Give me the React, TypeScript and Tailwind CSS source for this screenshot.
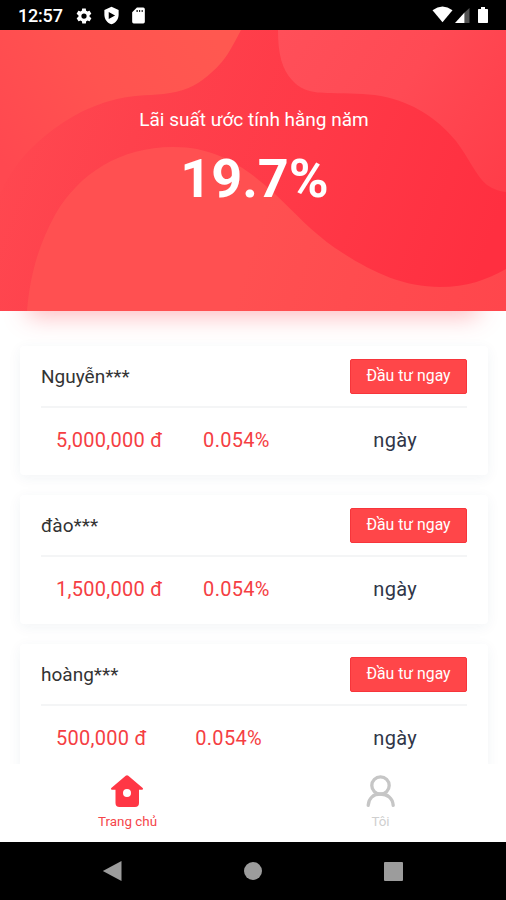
const loans = [
  { name: 'Nguyễn***', amount: '5,000,000 đ', rate: '0.054%' },
  { name: 'đào***', amount: '1,500,000 đ', rate: '0.054%' },
  { name: 'hoàng***', amount: '500,000 đ', rate: '0.054%' },
];

function StatusBar() {
  return (
    <div className="flex h-[30px] shrink-0 items-center bg-black pr-[15px] pl-[18px] text-white">
      <span className="w-[57px] pt-0.5 text-[18px] leading-none font-medium tracking-[-0.2px]">12:57</span>
      <svg className="mt-px h-[18px] w-[18px]" viewBox="0 0 24 24" fill="currentColor">
        <path fillRule="evenodd" d="M19.4 13a7.7 7.7 0 0 0 0-2l2.1-1.7c.2-.2.3-.4.1-.6l-2-3.5c-.1-.2-.4-.3-.6-.2l-2.5 1a7.300 7.300 0 0 0-1.700-1l-.4-2.600c0-.2-.2-.4-.5-.4h-4c-.2 0-.4.2-.4.4L9.100 5a7.300 7.300 0 0 0-1.700 1l-2.500-1c-.2-.1-.5 0-.6.2l-2 3.500c-.1.2-.1.4.1.6L4.600 11a7.700 7.700 0 0 0 0 2l-2.100 1.700c-.2.2-.3.4-.1.6l2 3.500c.1.2.4.3.6.2l2.500-1c.5.4 1.100.7 1.700 1l.4 2.600c0 .2.2.4.4.4h4c.3 0 .5-.2.5-.4l.4-2.600a7.300 7.300 0 0 0 1.700-1l2.500 1c.2.1.5 0 .6-.2l2-3.500c.1-.2.1-.4-.1-.6zM12 15.500a3.500 3.500 0 1 1 0-7 3.500 3.500 0 0 1 0 7z" />
      </svg>
      <svg className="ml-[9px] h-[19px] w-[19px]" viewBox="0 0 24 24" fill="currentColor">
        <path fillRule="evenodd" d="M12 1 3 5v6c0 5.500 3.800 10.700 9 12 5.200-1.300 9-6.500 9-12V5zM8.500 7.500l8 4.500-8 4.500z" />
      </svg>
      <svg className="ml-[8px] h-[19px] w-[19px]" viewBox="0 0 24 24" fill="currentColor">
        <path fillRule="evenodd" d="M18 2h-8L4 8v12a2 2 0 0 0 2 2h12a2 2 0 0 0 2-2V4a2 2 0 0 0-2-2zM9.500 7.500V5h1.500v2.500zm3.300 0V5h1.300v2.500zm3.200 0V5h1.300v2.500z" />
      </svg>
      <svg className="ml-auto h-[30px] w-[60px]" viewBox="0 0 60 30" fill="white">
        <path d="M1.500 10.200Q11.500 2.800 21.500 10.200L11.500 22.300z" />
        <path d="M33.500 12.500 38.500 8v15h-5z" opacity=".32" />
        <path d="M24 23 33.500 12.500V23z" />
        <path d="M47.700 9h2.300V7h4v2h2.300q.7 0 .7.700v12.600q0 .7-.7.700h-8.600q-.7 0-.7-.7V9.700q0-.7.700-.7z" />
      </svg>
    </div>
  );
}

function HeroWaves() {
  return (
    <svg className="absolute inset-0 h-full w-full" viewBox="0 0 506 281" preserveAspectRatio="none">
      <defs>
        <linearGradient id="base" x1="0" y1="0.4" x2="1" y2="0.6">
          <stop offset="0" stopColor="#ff4850" />
          <stop offset="0.25" stopColor="#fe414c" />
          <stop offset="0.6" stopColor="#ff3947" />
          <stop offset="1" stopColor="#ff2f40" />
        </linearGradient>
        <linearGradient id="topLeft" gradientUnits="userSpaceOnUse" x1="210" y1="0" x2="0" y2="130">
          <stop offset="0" stopColor="#ff5850" />
          <stop offset="0.5" stopColor="#ff5350" />
          <stop offset="1" stopColor="#ff4850" />
        </linearGradient>
        <linearGradient id="topRight" gradientUnits="userSpaceOnUse" x1="280" y1="0" x2="506" y2="150">
          <stop offset="0" stopColor="#ff4f59" />
          <stop offset="0.5" stopColor="#ff4a54" />
          <stop offset="1" stopColor="#ff3d49" />
        </linearGradient>
        <linearGradient id="bottom" gradientUnits="userSpaceOnUse" x1="90" y1="150" x2="506" y2="281">
          <stop offset="0" stopColor="#ff5051" />
          <stop offset="0.4" stopColor="#ff5051" />
          <stop offset="1" stopColor="#ff464c" />
        </linearGradient>
      </defs>
      <rect width="506" height="281" fill="url(#base)" />
      <path fill="url(#topLeft)" d="M0 0H241C232 17 226 30 212 42C200 53 189 60 170 63C152 66 137 64 117 69C84 77 59 93 38 112C20 128 9 144 0 165z" />
      <path fill="url(#topRight)" d="M278 0C278 24 282 39 292 50C301 60 311 63 331 63C350 64 364 63 381 66C413 72 438 89 456 111C469 128 476 146 487 155Q496 161 506 162V0z" />
      <path fill="url(#bottom)" d="M27 281C30 246 38 216 55 185C79 143 121 117 173 117C219 117 247 139 274 163C297 185 311 201 335 218C368 240 401 257 440 257C467 257 486 250 506 239V281z" />
    </svg>
  );
}

function LoanCard({ name, amount, rate }: { name: string; amount: string; rate: string }) {
  return (
    <div className="flex h-[129px] shrink-0 flex-col rounded-[4px] bg-white px-[21px] pt-[13px] shadow-[0_3px_14px_rgba(40,60,100,0.06)]">
      <div className="flex h-[35px] items-center justify-between">
        <span className="pt-[2px] text-[19px] text-[#333]">{name}</span>
        <button className="h-[35px] w-[117px] rounded-[2px] border border-[#f7353b] bg-[#ff4649] pb-[2px] text-[15.8px] leading-none whitespace-nowrap text-white">
          Đầu tư ngay
        </button>
      </div>
      <div className="mt-[12px] h-[2px] bg-[#f4f5f6]" />
      <div className="flex h-[64px] items-center pr-[50px] pl-[15px] text-[20px] leading-none text-[#f53e43]">
        <span className="tracking-[0.28px] whitespace-nowrap">{amount}</span>
        <span className="flex-1" />
        <span className="tracking-[0.3px]">{rate}</span>
        <span className="grow basis-[63px]" />
        <span className="tracking-[0.3px] text-[#303648]">ngày</span>
      </div>
    </div>
  );
}

function BottomTabs() {
  return (
    <nav className="grid h-[78px] shrink-0 grid-cols-2 bg-white text-[13.4px] leading-none">
      <div className="flex flex-col items-center pt-[10px] text-[#f5454a]">
        <svg className="h-[34px] w-[34px]" viewBox="0 0 34 34">
          <path fill="#ff3745" fillRule="evenodd" d="M15.700 1.800q1.300-1 2.600 0L32.700 14q1 1-.4 1.800H29V29q0 4-4 4H9.500q-4 0-4-4V15.800H1.700q-1.400-.8-.4-1.800zM17 15a4 4 0 1 0 0 8 4 4 0 0 0 0-8z" />
        </svg>
        <span className="mt-[7px] ml-[2px]">Trang chủ</span>
      </div>
      <div className="flex flex-col items-center pt-[10px] text-[#cfcfcf]">
        <svg className="h-[34px] w-[34px]" viewBox="0 0 34 34" fill="none" stroke="#c6c6c6" strokeWidth="3.300" strokeLinecap="round">
          <circle cx="17.500" cy="11.500" r="8.700" />
          <path d="M5.200 31.300C5.700 24 10.700 20 17.500 20S29.700 24 30.200 31.300" />
        </svg>
        <span className="mt-[7px] ml-[2px]">Tôi</span>
      </div>
    </nav>
  );
}

function SystemNav() {
  return (
    <div className="flex h-[58px] shrink-0 items-center justify-between bg-black pr-[103px] pl-[102px]">
      <svg className="h-[22px] w-[20px]" viewBox="0 0 20 22" fill="#9c9c9c">
        <path d="M19.500 1v20L.8 11z" />
      </svg>
      <div className="h-[18px] w-[18px] rounded-full bg-[#9c9c9c]" />
      <div className="h-[19px] w-[19px] rounded-[1px] bg-[#9c9c9c]" />
    </div>
  );
}

export default function App() {
  return (
    <div className="flex h-[900px] w-[506px] flex-col overflow-hidden bg-white font-[Roboto,'Noto_Sans',sans-serif]">
      <StatusBar />
      <header className="relative z-10 h-[281px] shrink-0">
        <div className="absolute inset-x-[28px] bottom-0 h-[40px] shadow-[0_5px_24px_rgba(255,70,85,0.38)]" />
        <HeroWaves />
        <div className="relative flex flex-col items-center pt-[79px] text-white">
          <p className="ml-[2px] text-[19px] leading-[22px] whitespace-nowrap">Lãi suất ước tính hằng năm</p>
          <p className="mt-[18px] ml-[3px] text-[54px] leading-[60px] font-bold">19.7%</p>
        </div>
      </header>
      <main className="flex min-h-0 flex-1 flex-col gap-[20px] overflow-hidden pt-[35px] pr-[18px] pl-[20px]">
        {loans.map((loan) => (
          <LoanCard key={loan.name} {...loan} />
        ))}
      </main>
      <BottomTabs />
      <SystemNav />
    </div>
  );
}
